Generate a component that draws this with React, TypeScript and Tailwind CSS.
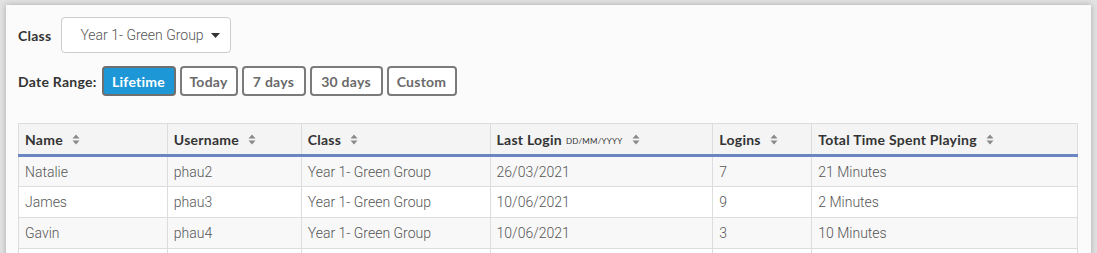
const rows = [
  { name: "Natalie", username: "phau2", cls: "Year 1- Green Group", last: "26/03/2021", logins: "7", time: "21 Minutes" },
  { name: "James", username: "phau3", cls: "Year 1- Green Group", last: "10/06/2021", logins: "9", time: "2 Minutes" },
  { name: "Gavin", username: "phau4", cls: "Year 1- Green Group", last: "10/06/2021", logins: "3", time: "10 Minutes" },
  { name: "", username: "", cls: "", last: "", logins: "", time: "" },
];

const ranges = [
  { label: "Lifetime", w: "w-[74px]" },
  { label: "Today", w: "w-[58px]" },
  { label: "7 days", w: "w-[64px]" },
  { label: "30 days", w: "w-[73px]" },
  { label: "Custom", w: "w-[70px]" },
];

const heading = "font-['Lato','Liberation_Sans',sans-serif] tracking-[0.25px]";
const body = "font-['Roboto','Liberation_Sans',sans-serif] font-light tracking-normal";

function SortIcon() {
  return (
    <svg width="8" height="11" viewBox="0 0 8 11" className="ml-[9px] inline-block">
      <path d="M4 0.5 L7.5 4.5 H0.5 Z" fill="#8a8a8a" />
      <path d="M4 10.5 L7.5 6.5 H0.5 Z" fill="#8a8a8a" />
    </svg>
  );
}

function Th({ children, width }: { children: React.ReactNode; width: string }) {
  return (
    <th className={`${width} border-r border-[#dddddd] px-[6px] text-left text-[14px] font-bold text-[#333333] last:border-r-0`}>
      <span className="flex items-center">{children}</span>
    </th>
  );
}

export default function App() {
  return (
    <div className="h-[253px] w-[1097px] overflow-hidden bg-[#e2e2e2] pl-[6px] pt-[5px]">
      <div className={`h-[300px] w-[1085px] bg-[#fbfbfb] px-[12px] pt-[12px] shadow-[0_0_6px_rgba(0,0,0,0.25)] ${heading}`}>
        <div className="flex items-center gap-[10px]">
          <span className="text-[14px] font-bold text-[#333333]">Class</span>
          <div className="flex h-[36px] w-[170px] items-center justify-between rounded-[4px] border border-[#cccccc] bg-white pl-[18px] pr-[10px]">
            <span className={`text-[14px] text-[#555555] ${body}`}>Year 1- Green Group</span>
            <svg width="9" height="5" viewBox="0 0 9 5">
              <path d="M0 0 H9 L4.5 5 Z" fill="#333333" />
            </svg>
          </div>
        </div>

        <div className="mt-[13px] flex items-center gap-[4px]">
          <span className="mr-[1px] text-[14px] font-bold text-[#333333]">Date Range:</span>
          {ranges.map((r, i) => (
            <button
              key={r.label}
              className={
                i === 0
                  ? `h-[30px] ${r.w} rounded-[4px] border-2 border-[#6f6f6f] bg-[#1e97d6] pt-[1px] text-[14px] font-bold text-white`
                  : `h-[30px] ${r.w} rounded-[4px] border-2 border-[#7b7b7b] bg-white pt-[1px] text-[14px] font-bold text-[#6a6a6a]`
              }
            >
              {r.label}
            </button>
          ))}
        </div>

        <table className="mt-[27px] w-[1060px] border-collapse border border-[#dddddd]">
          <thead>
            <tr className="h-[32px] border-b-[3px] border-b-[#6b84c2] bg-[#f4f4f4]">
              <Th width="w-[149px]">Name <SortIcon /></Th>
              <Th width="w-[134px]">Username <SortIcon /></Th>
              <Th width="w-[189px]">Class <SortIcon /></Th>
              <Th width="w-[223px]">
                Last Login <span className="ml-[4px] mt-[3px] text-[8px] font-normal">DD/MM/YYYY</span> <SortIcon />
              </Th>
              <Th width="w-[99px]">Logins <SortIcon /></Th>
              <Th width="w-[266px]">Total Time Spent Playing <SortIcon /></Th>
            </tr>
          </thead>
          <tbody className={`text-[14px] text-[#555555] ${body}`}>
            {rows.map((r, i) => (
              <tr key={i} className={`h-[31px] border-b border-[#dddddd] ${i % 2 === 0 ? "bg-[#f8f8f8]" : "bg-white"}`}>
                <td className="border-r border-[#dddddd] px-[6px] pt-[1px]">{r.name}</td>
                <td className="border-r border-[#dddddd] px-[6px] pt-[1px]">{r.username}</td>
                <td className="border-r border-[#dddddd] px-[6px] pt-[1px]">{r.cls}</td>
                <td className="border-r border-[#dddddd] px-[6px] pt-[1px]">{r.last}</td>
                <td className="border-r border-[#dddddd] px-[6px] pt-[1px]">{r.logins}</td>
                <td className="px-[6px] pt-[1px]">{r.time}</td>
              </tr>
            ))}
          </tbody>
        </table>
      </div>
    </div>
  );
}
